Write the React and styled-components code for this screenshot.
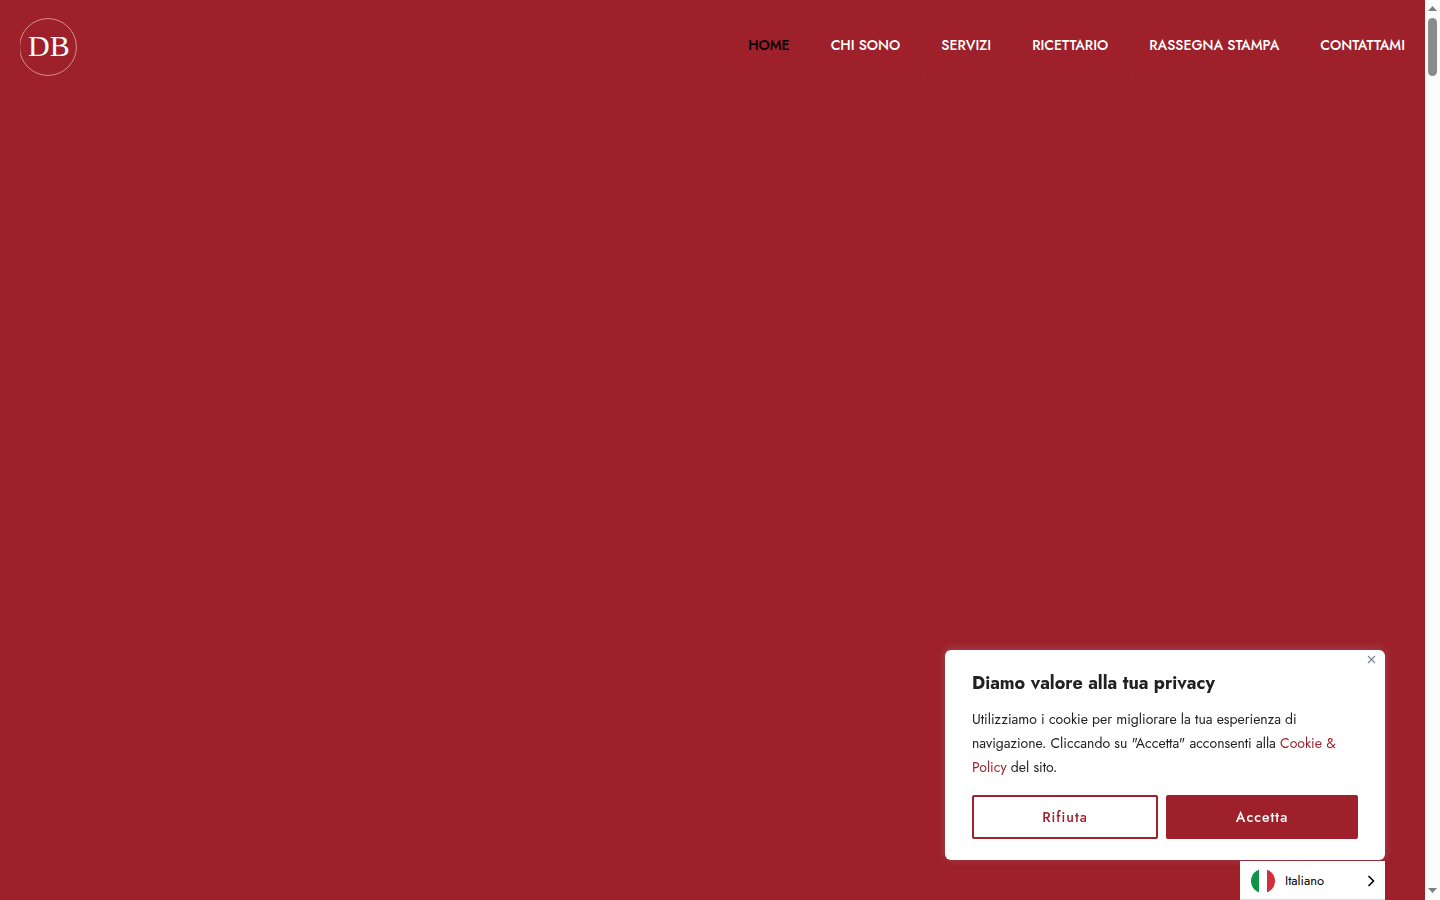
import { useState } from "react";
import styled, { createGlobalStyle } from "styled-components";

const GlobalStyle = createGlobalStyle`
  * {
    box-sizing: border-box;
  }
  body {
    margin: 0;
    background-color: #9d202a;
    color: #212121;
    font-family: Jost, Lato, "Liberation Sans", sans-serif;
    font-size: 14px;
  }
`;

const Page = styled.div`
  display: flex;
  min-height: 100vh;
`;

const Content = styled.div`
  flex: 1;
`;

const StyledHeader = styled.header`
  display: flex;
  justify-content: space-between;
  align-items: flex-start;
  padding: 15px 20px;
`;

const LogoLink = styled.a`
  margin-top: 2px;
  > svg {
    display: block;
  }
`;

const Nav = styled.nav`
  display: flex;
  > a {
    padding: 0 20px;
    border-right: 1px solid #971f29;
    color: #fff;
    font-size: 14px;
    font-weight: 500;
    line-height: 60px;
    text-decoration: none;
    text-transform: uppercase;
  }
  > a:last-child {
    padding-right: 0;
    border-right: none;
  }
  > a.active {
    color: #000;
  }
`;

const ScrollTrack = styled.div`
  width: 15px;
  height: 100vh;
  padding: 6px 3px 7px;
  display: flex;
  flex-direction: column;
  align-items: center;
  justify-content: space-between;
  background-color: #fcfcfc;
  > svg {
    display: block;
  }
  > div {
    width: 9px;
    flex: 1;
    padding-top: 7px;
  }
`;

const ScrollThumb = styled.div`
  height: 58px;
  border-radius: 5px;
  background-color: #8b8b8b;
`;

const Consent = styled.section`
  position: fixed;
  right: 55px;
  bottom: 40px;
  width: 440px;
  padding: 21px 27px;
  border-radius: 6px;
  background-color: #fff;
  box-shadow: 0 -1px 10px rgba(172, 171, 171, 0.3);
  > h2 {
    margin: 0 0 12px;
    font-size: 18px;
    line-height: 24px;
    font-weight: 700;
  }
  > p {
    margin: 0 0 16px;
    font-size: 14px;
    line-height: 24px;
  }
  > p a {
    color: #9d202a;
    text-decoration: none;
  }
`;

const CloseButton = styled.button`
  position: absolute;
  top: 5px;
  right: 9px;
  padding: 0;
  border: none;
  background-color: transparent;
  cursor: pointer;
  > svg {
    display: block;
  }
`;

const Actions = styled.div`
  display: flex;
  gap: 8px;
`;

const ConsentButton = styled.button`
  flex: 1 1 ${({ $filled }) => ($filled ? "52px" : "46px")};
  height: 44px;
  border: 2px solid #9d202a;
  border-radius: 2px;
  background-color: ${({ $filled }) => ($filled ? "#9d202a" : "#fff")};
  color: ${({ $filled }) => ($filled ? "#fff" : "#9d202a")};
  font-family: inherit;
  font-size: 14px;
  font-weight: 500;
  letter-spacing: 1px;
  cursor: pointer;
`;

const Language = styled.label`
  position: fixed;
  right: 55px;
  bottom: 0;
  width: 145px;
  height: 39px;
  padding: 1px 10px 0 11px;
  display: flex;
  align-items: center;
  gap: 10px;
  border-bottom: 1px solid #ddd;
  background-color: #fff;
  > svg {
    flex: none;
  }
  > select {
    flex: 1;
    min-width: 0;
    padding: 0;
    appearance: none;
    border: none;
    background-color: transparent;
    color: #000;
    font-family: inherit;
    font-size: 13px;
    line-height: 20px;
  }
`;

const links = [
  { label: "Home", href: "#home" },
  { label: "Chi sono", href: "#chi-sono" },
  { label: "Servizi", href: "#servizi" },
  { label: "Ricettario", href: "#ricettario" },
  { label: "Rassegna stampa", href: "#rassegna-stampa" },
  { label: "Contattami", href: "#contattami" },
];

const Logo = () => (
  <svg width="58" height="60" viewBox="0 0 58 60" aria-hidden="true">
    <circle cx="28" cy="30" r="28.4" fill="none" stroke="#dc9a9b" strokeWidth="0.9" />
    <text x="8" y="39" fill="#fff" fontFamily="'Liberation Serif', serif" fontSize="30">DB</text>
  </svg>
);

const Header = () => (
  <StyledHeader>
    <LogoLink href="#home" aria-label="Home">
      <Logo />
    </LogoLink>
    <Nav>
      {links.map((link, i) => (
        <a key={link.href} href={link.href} className={i === 0 ? "active" : undefined}>
          {link.label}
        </a>
      ))}
    </Nav>
  </StyledHeader>
);

const CookieBanner = ({ onClose }) => (
  <Consent aria-labelledby="consent-title">
    <CloseButton onClick={onClose} aria-label="Chiudi">
      <svg width="9" height="9" viewBox="0 0 9 9" fill="none" stroke="#7b8499" strokeWidth="1.2">
        <path d="M1 1l7 7M8 1l-7 7" />
      </svg>
    </CloseButton>
    <h2 id="consent-title">Diamo valore alla tua privacy</h2>
    <p>
      Utilizziamo i cookie per migliorare la tua esperienza di navigazione. Cliccando su
      "Accetta" acconsenti alla <a href="#cookie-policy">Cookie &amp; Policy</a> del sito.
    </p>
    <Actions>
      <ConsentButton onClick={onClose}>Rifiuta</ConsentButton>
      <ConsentButton $filled onClick={onClose}>Accetta</ConsentButton>
    </Actions>
  </Consent>
);

const LanguageSelect = () => (
  <Language>
    <svg width="24" height="24" viewBox="0 0 24 24" aria-hidden="true">
      <clipPath id="flag">
        <circle cx="12" cy="12" r="12" />
      </clipPath>
      <g clipPath="url(#flag)">
        <path fill="#fff" d="M0 0h24v24H0z" />
        <path fill="#109347" d="M0 0h8v24H0z" />
        <path fill="#d32f3a" d="M16 0h8v24h-8z" />
      </g>
    </svg>
    <select aria-label="Lingua" defaultValue="it">
      <option value="it">Italiano</option>
    </select>
    <svg width="8" height="12" viewBox="0 0 8 12" fill="none" stroke="#000" strokeWidth="1.6" aria-hidden="true">
      <path d="M1.5 1l5 5-5 5" />
    </svg>
  </Language>
);

const App = () => {
  const [showBanner, setShowBanner] = useState(true);

  return (
    <Page>
      <GlobalStyle />
      <Content>
        <Header />
      </Content>
      <ScrollTrack aria-hidden="true">
        <svg width="9" height="5" viewBox="0 0 9 5">
          <path fill="#7f7f7f" d="M4.5 0L9 5H0z" />
        </svg>
        <div>
          <ScrollThumb />
        </div>
        <svg width="9" height="5" viewBox="0 0 9 5">
          <path fill="#7f7f7f" d="M0 0h9L4.5 5z" />
        </svg>
      </ScrollTrack>
      {showBanner && <CookieBanner onClose={() => setShowBanner(false)} />}
      <LanguageSelect />
    </Page>
  );
};

export default App;
